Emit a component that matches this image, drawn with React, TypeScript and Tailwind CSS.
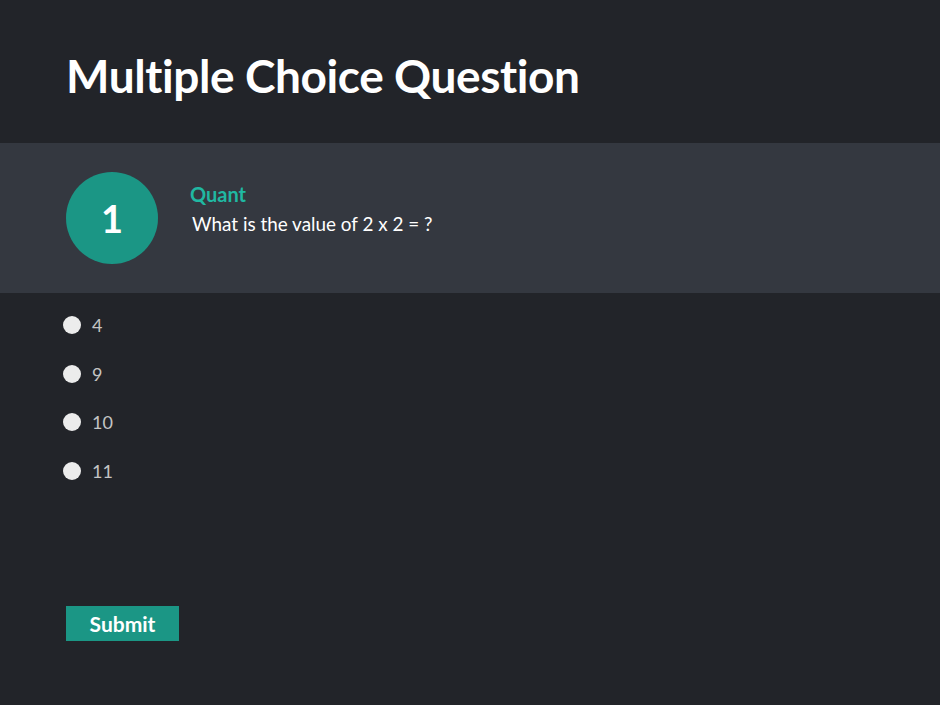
import { useState } from "react";

const options = ["4", "9", "10", "11"];

export default function App() {
  const [picked, setPicked] = useState<string | null>(null);

  return (
    <div className="min-h-[705px] w-full bg-[#222429] font-['Lato',sans-serif] text-white">
      <header className="h-[143px] px-[66px] pt-[48px]">
        <h1 className="text-[46px] font-bold leading-[56px] tracking-[-0.4px]">Multiple Choice Question</h1>
      </header>

      <section className="flex h-[150px] items-center bg-[#343840] px-[66px]">
        <div className="flex h-[92px] w-[92px] items-center justify-center rounded-full bg-[#1b9685] text-[38px] font-bold">
          1
        </div>
        <div className="ml-[32px] -mt-[20px] flex flex-col">
          <span className="text-[20px] font-bold leading-[26px] text-[#20b8a2]">Quant</span>
          <span className="ml-[2px] mt-[5px] text-[18.9px] leading-[24px]">What is the value of 2 x 2 = ?</span>
        </div>
      </section>

      <div className="flex flex-col px-[63px] pt-[22px]">
        {options.map((o) => (
          <label key={o} className="flex h-[48.5px] cursor-pointer items-start">
            <span
              onClick={() => setPicked(o)}
              className="mt-[1px] flex h-[18px] w-[18px] items-center justify-center rounded-full bg-[#ececec]"
            >
              {picked === o && <span className="h-[8px] w-[8px] rounded-full bg-[#1b9685]" />}
            </span>
            <span className="ml-[11px] text-[18px] leading-[20px] text-[#c4c4c4]">{o}</span>
          </label>
        ))}
      </div>

      <div className="px-[66px] pt-[97px]">
        <button className="h-[35px] w-[113px] bg-[#1b9685] text-[21px] font-bold text-white">Submit</button>
      </div>
    </div>
  );
}
